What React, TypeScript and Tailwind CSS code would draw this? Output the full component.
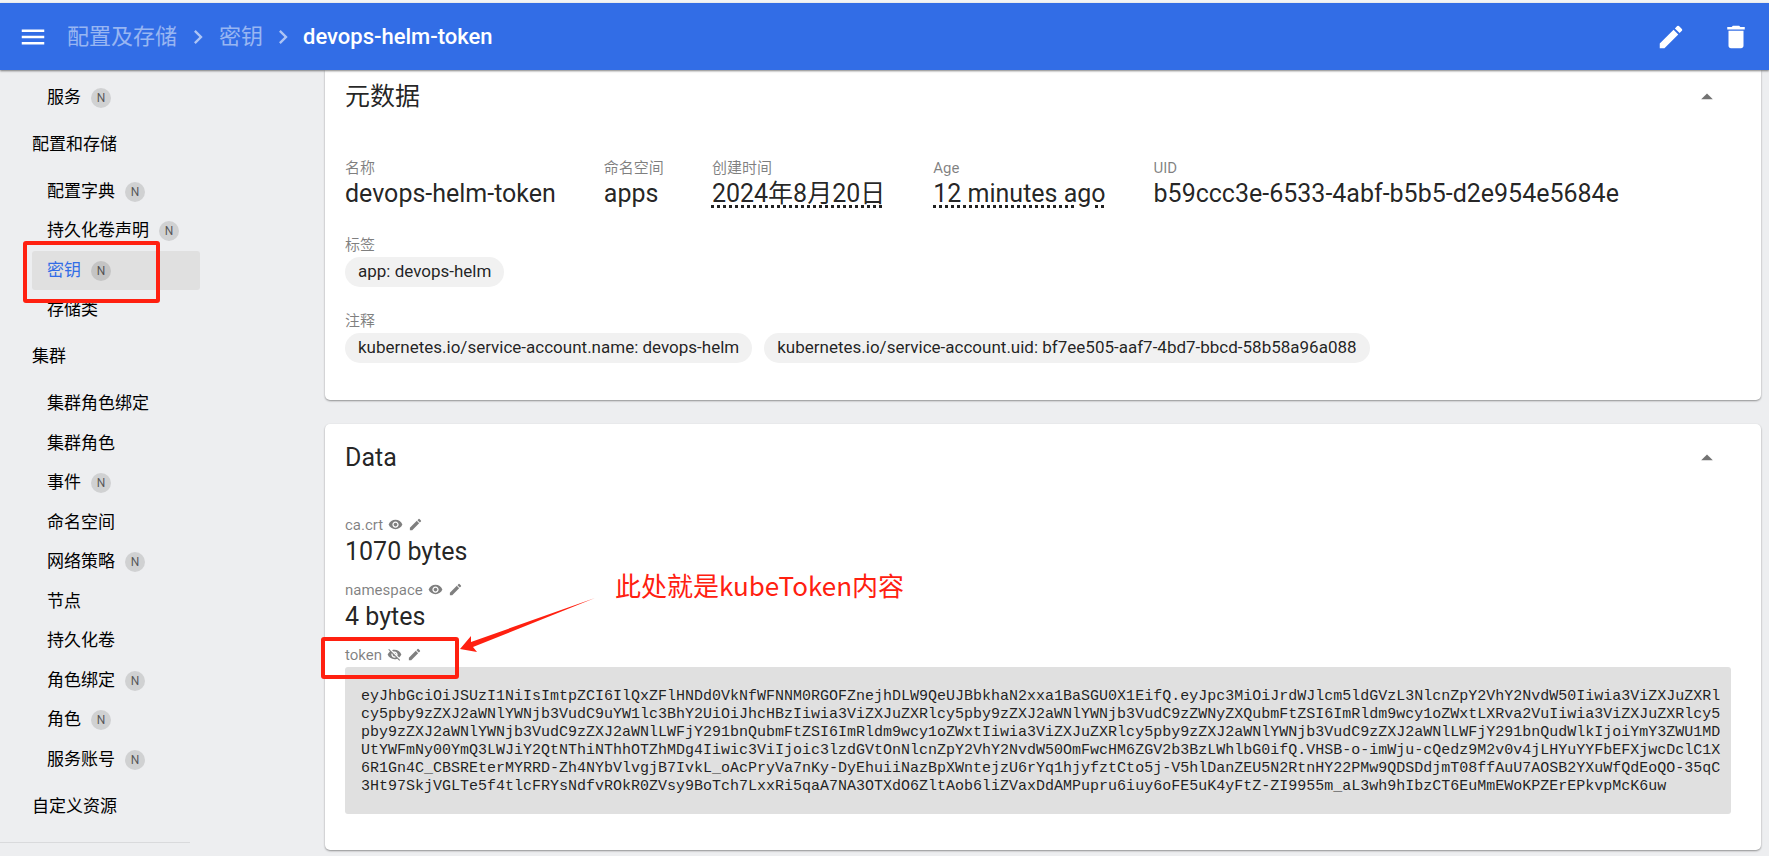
import { ReactNode } from "react";
import {
  MdArrowDropUp,
  MdChevronRight,
  MdDelete,
  MdEdit,
  MdMenu,
  MdVisibility,
  MdVisibilityOff,
} from "react-icons/md";

interface INavItem {
  label: string;
  namespaced?: boolean;
  heading?: boolean;
  active?: boolean;
}

const navItems: INavItem[] = [
  { label: "服务", namespaced: true },
  { label: "配置和存储", heading: true },
  { label: "配置字典", namespaced: true },
  { label: "持久化卷声明", namespaced: true },
  { label: "密钥", namespaced: true, active: true },
  { label: "存储类" },
  { label: "集群", heading: true },
  { label: "集群角色绑定" },
  { label: "集群角色" },
  { label: "事件", namespaced: true },
  { label: "命名空间" },
  { label: "网络策略", namespaced: true },
  { label: "节点" },
  { label: "持久化卷" },
  { label: "角色绑定", namespaced: true },
  { label: "角色", namespaced: true },
  { label: "服务账号", namespaced: true },
  { label: "自定义资源", heading: true },
];

const token =
  "eyJhbGciOiJSUzI1NiIsImtpZCI6IlQxZFlHNDd0VkNfWFNNM0RGOFZnejhDLW9QeUJBbkhaN2xxa1BaSGU0X1EifQ.eyJpc3MiOiJrdWJlcm5ldGVzL3NlcnZpY2VhY2NvdW50Iiwia3ViZXJuZXRl" +
  "cy5pby9zZXJ2aWNlYWNjb3VudC9uYW1lc3BhY2UiOiJhcHBzIiwia3ViZXJuZXRlcy5pby9zZXJ2aWNlYWNjb3VudC9zZWNyZXQubmFtZSI6ImRldm9wcy1oZWxtLXRva2VuIiwia3ViZXJuZXRlcy5" +
  "pby9zZXJ2aWNlYWNjb3VudC9zZXJ2aWNlLWFjY291bnQubmFtZSI6ImRldm9wcy1oZWxtIiwia3ViZXJuZXRlcy5pby9zZXJ2aWNlYWNjb3VudC9zZXJ2aWNlLWFjY291bnQudWlkIjoiYmY3ZWU1MD" +
  "UtYWFmNy00YmQ3LWJiY2QtNThiNThhOTZhMDg4Iiwic3ViIjoic3lzdGVtOnNlcnZpY2VhY2NvdW50OmFwcHM6ZGV2b3BzLWhlbG0ifQ.VHSB-o-imWju-cQedz9M2v0v4jLHYuYYFbEFXjwcDclC1X" +
  "6R1Gn4C_CBSREterMYRRD-Zh4NYbVlvgjB7IvkL_oAcPryVa7nKy-DyEhuiiNazBpXWntejzU6rYq1hjyfztCto5j-V5hlDanZEU5N2RtnHY22PMw9QDSDdjmT08ffAuU7AOSB2YXuWfQdEoQO-35qC" +
  "3Ht97SkjVGLTe5f4tlcFRYsNdfvROkR0ZVsy9BoTch7LxxRi5qaA7NA3OTXdO6ZltAob6liZVaxDdAMPupru6iuy6oFE5uK4yFtZ-ZI9955m_aL3wh9hIbzCT6EuMmEWoKPZErEPkvpMcK6uw";

const Header = () => (
  <header className="relative z-10 flex h-[67px] shrink-0 items-center bg-[#326de6] px-[18px] text-[22px] text-white shadow-[0_1px_2px_rgba(0,0,0,0.5)]">
    <button aria-label="menu">
      <MdMenu size={30} />
    </button>
    <nav className="ml-[19px] flex flex-1 items-center">
      <a href="#config" className="text-white/50">
        配置及存储
      </a>
      <MdChevronRight size={28} className="mx-[7px] text-white/60" />
      <a href="#secret" className="text-white/50">
        密钥
      </a>
      <MdChevronRight size={28} className="mx-[6px] text-white/60" />
      <span className="font-medium">devops-helm-token</span>
    </nav>
    <div className="flex gap-[35px]">
      <button aria-label="edit">
        <MdEdit size={30} />
      </button>
      <button aria-label="delete">
        <MdDelete size={30} />
      </button>
    </div>
  </header>
);

const Sidebar = () => (
  <aside className="flex w-[325px] shrink-0 flex-col pt-2 pb-[14px]">
    <ul className="flex flex-1 flex-col justify-between pr-[125px] pl-8 text-[17px] text-black">
      {navItems.map((item) =>
        item.heading ? (
          <li key={item.label} className="flex h-[54px] items-center">
            {item.label}
          </li>
        ) : (
          <li key={item.label}>
            <a
              href="#"
              className={
                item.active
                  ? "flex h-[39px] items-center gap-[10px] rounded-[3px] bg-[#e0e0e0] pl-[15px] text-[#326de6]"
                  : "flex h-[39px] items-center gap-[10px] pl-[15px]"
              }
            >
              {item.label}
              {item.namespaced && (
                <span className="flex size-5 items-center justify-center rounded-full bg-black/12 text-[12px] text-black/60">
                  N
                </span>
              )}
            </a>
          </li>
        )
      )}
    </ul>
    <hr className="mt-2 mr-[135px] border-[#d9dadc]" />
  </aside>
);

const CardTitle = ({ children }: { children: ReactNode }) => (
  <div className="flex h-[54px] items-center justify-between pr-5">
    <h2 className="text-[25px]">{children}</h2>
    <button aria-label="collapse" className="text-black/55">
      <MdArrowDropUp size={28} />
    </button>
  </div>
);

const Property = ({ label, children }: { label: string; children: ReactNode }) => (
  <div>
    <dt className="text-[15px] leading-[22px] text-black/50">{label}</dt>
    <dd className="text-[25px] leading-[30px]">{children}</dd>
  </div>
);

const Chip = ({ children }: { children: ReactNode }) => (
  <span className="flex h-[30px] items-center rounded-full bg-[#f1f1f1] px-[13px] text-[17px]">
    {children}
  </span>
);

const SecretEntry = ({
  name,
  visible,
  children,
}: {
  name: string;
  visible?: boolean;
  children: ReactNode;
}) => (
  <div>
    <div className="flex h-[23px] items-center text-[15px] text-black/50">
      <span>{name}</span>
      <button aria-label={"toggle " + name} className="mb-[3px] ml-[5px]">
        {visible ? <MdVisibilityOff size={15} /> : <MdVisibility size={15} />}
      </button>
      <button aria-label={"edit " + name} className="mb-[3px] ml-[5px]">
        <MdEdit size={15} />
      </button>
    </div>
    {children}
  </div>
);

const Metadata = () => (
  <section className="rounded-b-[5px] bg-white px-5 pb-[37px] shadow-[0_1px_2px_rgba(0,0,0,0.4)]">
    <CardTitle>元数据</CardTitle>
    <dl className="mt-[33px] flex flex-wrap gap-x-12">
      <Property label="名称">devops-helm-token</Property>
      <Property label="命名空间">apps</Property>
      <Property label="创建时间">
        <span className="underline decoration-dotted decoration-3 underline-offset-3">
          2024年8月20日
        </span>
      </Property>
      <Property label="Age">
        <span className="underline decoration-dotted decoration-3 underline-offset-3">
          12 minutes ago
        </span>
      </Property>
      <Property label="UID">b59ccc3e-6533-4abf-b5b5-d2e954e5684e</Property>
    </dl>
    <div className="mt-[25px]">
      <p className="text-[15px] leading-[22px] text-black/50">标签</p>
      <div className="mt-[1px] flex gap-3">
        <Chip>app: devops-helm</Chip>
      </div>
    </div>
    <div className="mt-[23px]">
      <p className="text-[15px] leading-[22px] text-black/50">注释</p>
      <div className="mt-[1px] flex gap-3">
        <Chip>kubernetes.io/service-account.name: devops-helm</Chip>
        <Chip>
          kubernetes.io/service-account.uid: bf7ee505-aaf7-4bd7-bbcd-58b58a96a088
        </Chip>
      </div>
    </div>
  </section>
);

const SecretData = () => (
  <section className="rounded-[5px] bg-white px-5 pt-[7px] pb-9 shadow-[0_1px_2px_rgba(0,0,0,0.4)]">
    <CardTitle>Data</CardTitle>
    <div className="mt-[29px]">
      <SecretEntry name="ca.crt">
        <p className="h-[42px] text-[25px] leading-[30px]">1070 bytes</p>
      </SecretEntry>
      <SecretEntry name="namespace">
        <p className="h-[42px] text-[25px] leading-[30px]">4 bytes</p>
      </SecretEntry>
      <SecretEntry name="token" visible>
        <div className="mr-[10px] rounded-[3px] bg-[#e0e0e0] pt-[21px] pr-2 pb-[18px] pl-4 font-['Liberation_Mono',monospace] text-[15px] leading-[18px] break-all">
          {token}
        </div>
      </SecretEntry>
    </div>
  </section>
);

const Annotations = () => (
  <div className="pointer-events-none absolute inset-0 z-20">
    <div className="absolute top-[238px] left-[23px] h-[62px] w-[137px] rounded-[3px] border-4 border-[#ff2010]" />
    <div className="absolute top-[634px] left-[321px] h-[42px] w-[138px] rounded-[3px] border-4 border-[#ff2010]" />
    <svg
      className="absolute top-[595px] left-[459px]"
      width="138"
      height="56"
      viewBox="459 598 138 56"
    >
      <path
        fill="#ff2010"
        d="M460 649 L471 636 L471 642 L595 598 L473 647 L477 652 Z"
      />
    </svg>
    <p className="absolute top-[562px] left-[615px] font-['Noto_Sans_CJK_SC',sans-serif] text-[26px] leading-10 whitespace-nowrap text-[#ff2010]">
      此处就是kubeToken内容
    </p>
  </div>
);

const App = () => {
  return (
    <div className="relative flex min-h-screen flex-col border-t-[3px] border-[#f3f4f5] bg-[#edeef0] font-[Roboto,'Noto_Sans_CJK_SC',sans-serif] text-black/87">
      <Header />
      <div className="flex flex-1">
        <Sidebar />
        <main className="flex min-w-0 flex-1 flex-col gap-6 pr-2 pb-[7px]">
          <Metadata />
          <SecretData />
        </main>
      </div>
      <Annotations />
    </div>
  );
};

export default App;
